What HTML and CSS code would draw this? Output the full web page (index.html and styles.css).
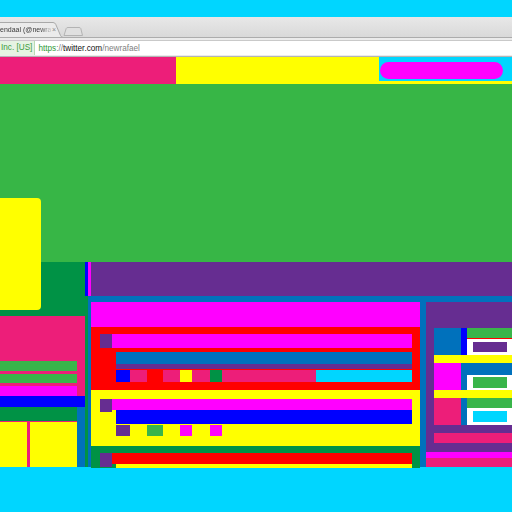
FILE: index.html
```html
<!DOCTYPE html>
<html>
<head>
<meta charset="utf-8">
<link rel="stylesheet" href="styles.css">
</head>
<body>
<div class="frame">
  <div class="band-top"></div>
  <div class="tabbar">
    <div class="tab">
      <svg class="tab-shape" width="64" height="15" viewBox="0 0 64 15"><path d="M-2 15.5 L-2 0.5 L53 0.5 Q55 0.5 55.8 2.5 L60.5 13.5 Q61 15 63 15.5" fill="#ebebeb" stroke="#a9a9a9" stroke-width="1"/></svg>
      <span class="tab-title">endaal (@newra</span>
      <span class="tab-close">×</span>
    </div>
    <svg class="newtab" width="20" height="9" viewBox="0 0 20 9"><path d="M1 8.5 L3.2 1.5 Q3.6 0.5 5 0.5 L16 0.5 Q17.4 0.5 17.8 1.5 L19.5 8.5 Z" fill="#e0e0e0" stroke="#b3b3b3" stroke-width="1"/></svg>
  </div>
  <div class="toolbar">
    <div class="omnibox">
      <span class="ev">Inc. [US]</span>
      <span class="url"><span class="scheme">https</span><span class="dim">://</span><span class="host">twitter.com</span><span class="dim">/newrafael</span></span>
    </div>
  </div>
  <div class="page">
    <div class="hdr">
      <div class="hdr-pink"></div>
      <div class="hdr-yellow">
        <div class="hdr-search"><div class="pill"></div></div>
      </div>
    </div>
    <div class="hero"></div>
    <div class="band">
      <div class="band-dg"></div>
      <div class="band-blue"></div>
      <div class="band-mag"></div>
      <div class="band-purple"></div>
    </div>
    <div class="lower">
      <div class="left">
        <div class="pinkblock">
          <div class="lb lb-green"></div>
          <div class="lb lb-green2"></div>
          <div class="lb lb-mag"></div>
        </div>
        <div class="left-blue"></div>
        <div class="left-bottom">
          <div class="left-bottom-main">
            <div class="yboxes">
              <div class="ybox ybox-a"></div>
              <div class="ybox ybox-b"></div>
            </div>
          </div>
          <div class="left-bottom-blue"></div>
        </div>
      </div>
      <div class="main">
        <div class="mid">
          <div class="mid-head"></div>
          <div class="card card-red">
            <div class="row">
              <div class="sq purple"></div>
              <div class="bar mag h14"></div>
            </div>
            <div class="stack red-stack">
              <div class="sbar blue h12"></div>
              <div class="sbar purple h5"></div>
              <div class="segs">
                <div class="seg bblue" style="width:14px"></div>
                <div class="seg pink" style="width:17px"></div>
                <div class="seg red" style="width:16px"></div>
                <div class="seg pink" style="width:17px"></div>
                <div class="seg yellow" style="width:12px"></div>
                <div class="seg pink" style="width:18px"></div>
                <div class="seg dgreen" style="width:12px"></div>
                <div class="seg pink" style="width:94px"></div>
                <div class="seg cyan" style="width:96px"></div>
              </div>
            </div>
          </div>
          <div class="card card-yellow">
            <div class="row row11">
              <div class="sq purple sq13"></div>
              <div class="bar mag h11"></div>
            </div>
            <div class="stack">
              <div class="sbar bblue h14"></div>
              <div class="segs segs11">
                <div class="seg purple" style="width:14px"></div>
                <div class="seg yellow" style="width:17px"></div>
                <div class="seg green" style="width:16px"></div>
                <div class="seg yellow" style="width:17px"></div>
                <div class="seg mag" style="width:12px"></div>
                <div class="seg yellow" style="width:18px"></div>
                <div class="seg mag" style="width:12px"></div>
              </div>
            </div>
          </div>
          <div class="card card-dg">
            <div class="row">
              <div class="sq purple"></div>
              <div class="col">
                <div class="sbar red h11"></div>
                <div class="sbar yellow h4 indent"></div>
              </div>
            </div>
          </div>
        </div>
        <div class="side">
          <div class="grp">
            <div class="gsq blue"></div>
            <div class="gstrip bblue"></div>
            <div class="gcol">
              <div class="g-green"></div>
              <div class="g-redline"></div>
              <div class="wbox"><div class="inner purple"></div></div>
            </div>
          </div>
          <div class="ybar"></div>
          <div class="grp">
            <div class="gsq mag"></div>
            <div class="gcol gcol-blue">
              <div class="g-bluetop"></div>
              <div class="wbox wbox-b"><div class="inner green"></div></div>
            </div>
          </div>
          <div class="ybar"></div>
          <div class="grp">
            <div class="gsq pink"></div>
            <div class="gstrip blue"></div>
            <div class="gcol">
              <div class="g-green"></div>
              <div class="wbox wbox-c"><div class="inner cyan"></div></div>
            </div>
          </div>
          <div class="side-pink"></div>
          <div class="side-foot">
            <div class="side-mag"></div>
          </div>
        </div>
      </div>
    </div>
    <div class="yellow-card"></div>
  </div>
  <div class="band-bottom"></div>
</div>
</body>
</html>
```
FILE: styles.css
```css
html, body {
  margin: 0;
  padding: 0;
}
body {
  width: 512px;
  height: 512px;
  overflow: hidden;
  font-family: "Liberation Sans", Arial, sans-serif;
}
.frame {
  width: 512px;
  height: 512px;
  display: flex;
  flex-direction: column;
}
.band-top {
  height: 17px;
  background: #00d6ff;
  flex: none;
}
.band-bottom {
  height: 45px;
  background: #00d6ff;
  flex: none;
}
.tabbar {
  height: 20px;
  flex: none;
  background: linear-gradient(#e8e8e8, #d9d9d9);
  border-bottom: 1px solid #acacac;
  display: flex;
  align-items: flex-end;
}
.tab {
  position: relative;
  width: 64px;
  height: 15px;
  flex: none;
}
.tab-shape {
  position: absolute;
  left: 0;
  top: 0;
}
.tab-title {
  position: absolute;
  left: 0;
  top: 3px;
  white-space: nowrap;
  font-size: 7px;
  line-height: 9px;
  color: #3a3a3a;
  -webkit-mask-image: linear-gradient(to right, #000 80%, rgba(0,0,0,0.15) 100%);
  mask-image: linear-gradient(to right, #000 80%, rgba(0,0,0,0.15) 100%);
}
.tab-close {
  position: absolute;
  left: 52px;
  top: 3px;
  font-size: 7px;
  line-height: 9px;
  color: #8a8a8a;
}
.newtab {
  flex: none;
  margin-left: -1px;
  margin-bottom: 1px;
}
.toolbar {
  flex: none;
  background: #ebebeb;
  border-bottom: 1px solid #b5b5b5;
  padding-top: 2px;
  box-sizing: border-box;
  height: 19px;
}
.omnibox {
  height: 15px;
  background: #fff;
  border-top: 1px solid #c9c9c9;
  box-sizing: border-box;
  display: flex;
  align-items: center;
  font-size: 8.2px;
  white-space: nowrap;
}
.ev {
  height: 14px;
  line-height: 14px;
  padding: 0 2px 0 1px;
  background: #e6f3e3;
  border-right: 1px solid #b9dcb4;
  color: #3c9c3c;
}
.url {
  margin-left: 3px;
}
.scheme { color: #2f9a37; }
.dim { color: #808080; }
.host { color: #111; }

/* page */
.page {
  position: relative;
  height: 410px;
  flex: none;
  display: flex;
  flex-direction: column;
}
.hdr {
  height: 27px;
  display: flex;
  flex: none;
}
.hdr-pink {
  width: 176px;
  background: #ed1e79;
}
.hdr-yellow {
  flex: 1;
  background: #ffff00;
  display: flex;
  justify-content: flex-end;
  align-items: flex-start;
}
.hdr-search {
  width: 133px;
  height: 24px;
  background: #00d6ff;
  padding: 5px 0 0 1px;
  box-sizing: border-box;
}
.pill {
  width: 123px;
  height: 17px;
  border-radius: 9px;
  background: #ff00ff;
}
.hero {
  height: 178px;
  flex: none;
  background: #37b646;
}
.band {
  height: 34px;
  flex: none;
  display: flex;
}
.band-dg { width: 85px; background: #009245; }
.band-blue { width: 3px; background: #0000ff; }
.band-mag { width: 3px; background: #ff00ff; }
.band-purple { flex: 1; background: #662d91; }
.lower {
  height: 171px;
  flex: none;
  display: flex;
}
.left {
  width: 88px;
  flex: none;
  background: #009245;
  padding-top: 20px;
  box-sizing: border-box;
  display: flex;
  flex-direction: column;
}
.pinkblock {
  width: 85px;
  height: 80px;
  flex: none;
  background: #ed1e79;
  padding-top: 45px;
  box-sizing: border-box;
  display: flex;
  flex-direction: column;
  gap: 3px;
}
.lb { width: 77px; height: 10px; flex: none; }
.lb-green { background: #39b54a; }
.lb-green2 { background: #39b54a; height: 9px; }
.lb-mag { background: #ff00ff; }
.left-blue {
  width: 85px;
  height: 11px;
  flex: none;
  background: #0000ff;
}
.left-bottom {
  flex: 1;
  display: flex;
  width: 85px;
}
.left-bottom-main {
  width: 77px;
  padding-top: 14px;
  box-sizing: border-box;
  display: flex;
  flex-direction: column;
}
.yboxes {
  flex: 1;
  background: #ed1e79;
  padding-top: 1px;
  display: flex;
  gap: 3px;
}
.ybox { background: #ffff00; }
.ybox-a { width: 27px; }
.ybox-b { flex: 1; }
.left-bottom-blue {
  flex: 1;
  background: #0071bc;
}
.main {
  flex: 1;
  background: #0071bc;
  padding: 6px 0 0 3px;
  display: flex;
  gap: 6px;
}
.mid {
  width: 329px;
  flex: none;
  display: flex;
  flex-direction: column;
}
.mid-head {
  height: 25px;
  flex: none;
  background: #ff00ff;
}
.card {
  padding: 7px 8px 0 9px;
  box-sizing: border-box;
  flex: none;
}
.card-red {
  height: 63px;
  background: #ff0000;
}
.card-yellow {
  height: 56px;
  background: #ffff00;
  padding-top: 9px;
}
.card-dg {
  flex: 1;
  background: #009245;
}
.row { display: flex; }
.row11 { height: 11px; }
.sq {
  width: 12px;
  height: 14px;
  flex: none;
}
.sq13 { height: 13px; }
.bar { flex: 1; }
.sbar { flex: none; }
.col {
  flex: 1;
  display: flex;
  flex-direction: column;
}
.indent { margin-left: 4px; }
.stack {
  margin-left: 16px;
  display: flex;
  flex-direction: column;
}
.red-stack { margin-top: 4px; }
.segs {
  display: flex;
  height: 12px;
  margin-top: 1px;
  flex: none;
}
.segs11 { height: 11px; }
.seg { flex: none; }
.h4 { height: 4px; }
.h5 { height: 5px; }
.h11 { height: 11px; }
.h12 { height: 12px; }
.h14 { height: 14px; }

.purple { background: #662d91; }
.mag { background: #ff00ff; }
.blue { background: #0071bc; }
.bblue { background: #0000ff; }
.pink { background: #ed1e79; }
.red { background: #ff0000; }
.yellow { background: #ffff00; }
.dgreen { background: #009245; }
.green { background: #39b54a; }
.cyan { background: #00d6ff; }

.side {
  flex: 1;
  background: #662d91;
  padding: 26px 0 0 8px;
  box-sizing: border-box;
  display: flex;
  flex-direction: column;
}
.grp {
  height: 27px;
  display: flex;
  flex: none;
}
.gsq { width: 27px; flex: none; }
.gstrip { width: 6px; flex: none; }
.gcol {
  flex: 1;
  display: flex;
  flex-direction: column;
}
.g-green { height: 10px; flex: none; background: #39b54a; }
.g-redline { height: 1px; flex: none; background: #ff0000; }
.wbox {
  flex: 1;
  background: #fff;
  padding: 3px 5px 3px 6px;
  box-sizing: border-box;
  display: flex;
}
.inner { flex: 1; }
.gcol-blue { background: #0071bc; }
.g-bluetop { height: 12px; flex: none; }
.wbox-b {
  margin-left: 6px;
  padding: 2px 5px 2px 6px;
}
.wbox-c { padding: 3px 5px 3px 6px; }
.ybar {
  height: 8px;
  background: #ffff00;
  flex: none;
}
.side-pink {
  height: 10px;
  margin-top: 8px;
  background: #ed1e79;
  flex: none;
}
.side-foot {
  flex: 1;
  margin-left: -8px;
  margin-top: 9px;
  background: #ed1e79;
}
.side-mag {
  height: 6px;
  background: #ff00ff;
}
.yellow-card {
  position: absolute;
  left: -6px;
  top: 141px;
  width: 47px;
  height: 112px;
  background: #ffff00;
  border-radius: 4px;
}
```
